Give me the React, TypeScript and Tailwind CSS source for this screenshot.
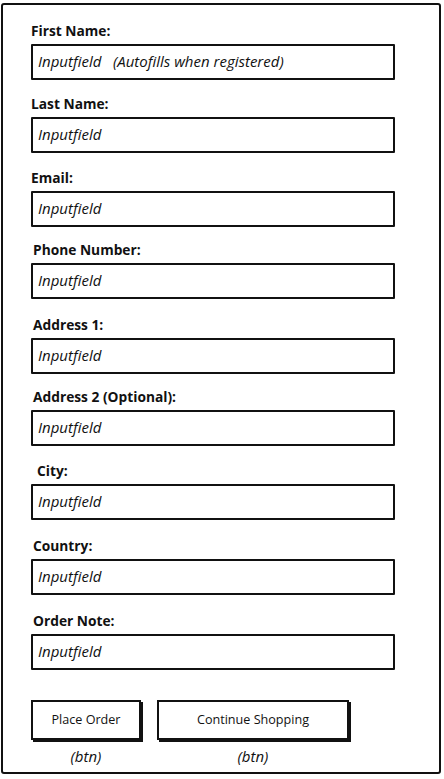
import React from "react";

type Field = { label: string; labelCls: string; text: string };

const fields: Field[] = [
  { label: "First Name:", labelCls: "mt-[18px] pl-0", text: "Inputfield\u00a0\u00a0\u00a0(Autofills when registered)" },
  { label: "Last Name:", labelCls: "mt-[16px] pl-0", text: "Inputfield" },
  { label: "Email:", labelCls: "mt-[17px] pl-0", text: "Inputfield" },
  { label: "Phone Number:", labelCls: "mt-[15px] pl-[2px]", text: "Inputfield" },
  { label: "Address 1:", labelCls: "mt-[18px] pl-[2px]", text: "Inputfield" },
  { label: "Address 2 (Optional):", labelCls: "mt-[15px] pl-[2px]", text: "Inputfield" },
  { label: "City:", labelCls: "mt-[17px] pl-[6px]", text: "Inputfield" },
  { label: "Country:", labelCls: "mt-[18px] pl-[2px]", text: "Inputfield" },
  { label: "Order Note:", labelCls: "mt-[18px] pl-[2px]", text: "Inputfield" },
];

export default function App() {
  return (
    <div
      className="w-[444px] h-[779px] bg-white pl-[1px] pt-[3px]"
      style={{ fontFamily: '"Open Sans", "Liberation Sans", sans-serif' }}
    >
      <div className="w-[440px] h-[771px] border-2 border-[#111] rounded-[3px] bg-white pl-[28px] flex flex-col">
        {fields.map((f) => (
          <div key={f.label} className="flex flex-col">
            <div className={`h-[16px] leading-[16px] text-[13.75px] font-bold text-[#111] ${f.labelCls}`}>
              {f.label}
            </div>
            <div className="mt-[5px] w-[364px] h-[36px] border-2 border-[#111] rounded-[1px] flex items-center pl-[5px] pb-[2px]">
              <span className="italic text-[15px] leading-[18px] text-[#111]">{f.text}</span>
            </div>
          </div>
        ))}
        <div className="mt-[30px] flex gap-[16px]">
          <div className="flex flex-col items-center w-[110px]">
            <div className="w-[110px] h-[40px] border-2 border-[#111] shadow-[2px_2px_0_0_#111] flex items-center justify-center text-[12.6px] text-[#111] pt-[1px]">
              Place Order
            </div>
            <div className="mt-[7px] h-[18px] leading-[18px] italic text-[15px] text-[#111]">(btn)</div>
          </div>
          <div className="flex flex-col items-center w-[192px]">
            <div className="w-[192px] h-[40px] border-2 border-[#111] shadow-[2px_2px_0_0_#111] flex items-center justify-center text-[12.6px] text-[#111] pt-[1px]">
              Continue Shopping
            </div>
            <div className="mt-[7px] h-[18px] leading-[18px] italic text-[15px] text-[#111]">(btn)</div>
          </div>
        </div>
      </div>
    </div>
  );
}
